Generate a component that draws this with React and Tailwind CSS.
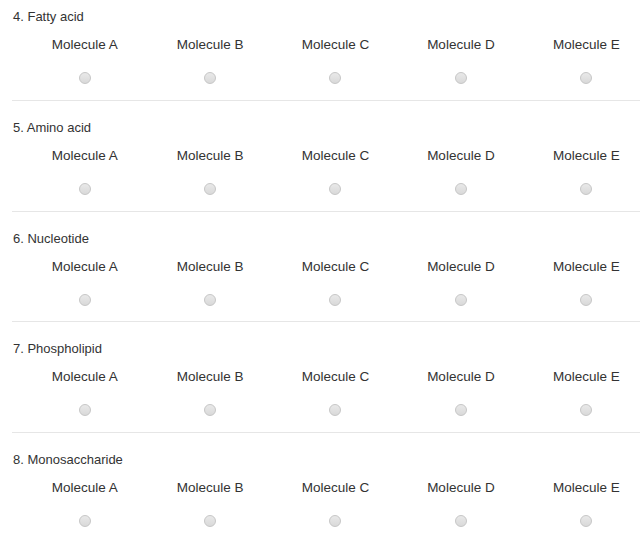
import React from "react";

const questions = [
  "4. Fatty acid",
  "5. Amino acid",
  "6. Nucleotide",
  "7. Phospholipid",
  "8. Monosaccharide",
];

const molecules = ["A", "B", "C", "D", "E"];

function Radio() {
  return (
    <span className="block w-3 h-3 rounded-full border border-[#c6c6c6] bg-gradient-to-b from-[#e9e9e9] to-[#d9d9d9]" />
  );
}

export default function App() {
  return (
    <div
      className="w-[640px] h-[543px] overflow-hidden bg-white text-[#333333]"
      style={{ fontFamily: '"Liberation Sans", Arial, sans-serif' }}
    >
      <div className="-mt-[10px]">
        {questions.map((q, i) => (
          <div key={i} className="ml-3 pt-[19px] border-b border-[#e6e6e6] h-[110.75px]">
            <div className="pl-px text-[13px] leading-4">{q}</div>
            <div className="ml-[10px] w-[627px] grid grid-cols-5 mt-3">
              {molecules.map((m) => (
                <div key={m} className="flex flex-col items-center">
                  <div className="text-[13.5px] leading-4">Molecule {m}</div>
                  <div className="mt-[19px]">
                    <Radio />
                  </div>
                </div>
              ))}
            </div>
          </div>
        ))}
      </div>
    </div>
  );
}
